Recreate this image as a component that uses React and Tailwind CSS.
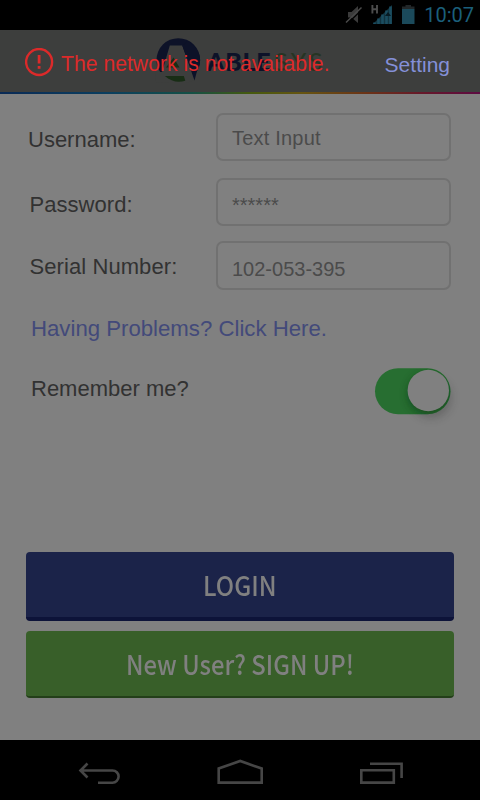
import React from "react";

const arial = "font-['Liberation_Sans',Arial,sans-serif]";

function StatusBar() {
  return (
    <div className="flex h-[30px] shrink-0 items-start justify-end bg-black pr-[6px]">
      <svg className="h-[30px] w-[80px]" viewBox="340 0 80 30" fill="none">
        <path d="M348 12h3.500l6.500-6v17l-6.500-5.500H348z" fill="#3b3b3b" />
        <path d="M346.800 24.300 362.300 9.300" stroke="#000" strokeWidth="1.200" />
        <path d="M346 22.500 361.500 7.500" stroke="#4a4a4a" strokeWidth="1.500" />
        <path d="M372.400 5v8.500M377 5v8.500M372.400 9.300H377" stroke="#4c4c4c" strokeWidth="1.900" />
        <path d="M373 24 392 5v19z" fill="#12333f" />
        <path d="M374.500 24v-1.500M378.500 24v-5.500M382.500 24v-9.500M386.500 24v-13.500M390.500 24V6.500" stroke="#1b4d60" strokeWidth="2.600" />
        <path d="M388 12l3 4h-6z" fill="#071a22" />
        <path d="M405.500 5h5.500v1.500h3.500v2.500H402V6.500h3.500z" fill="#222729" />
        <path d="M402 9h12.500v15H402z" fill="#1b4a5b" />
      </svg>
      <span className="ml-[4px] mt-[3px] font-['Roboto',sans-serif] text-[20px] leading-[24px] text-[#1b5f7b]">10:07</span>
    </div>
  );
}

function Logo() {
  return (
    <div className="flex h-[46px] items-start">
      <svg className="h-[46px] w-[46px]" viewBox="155 37 46 46" fill="none">
        <circle cx="178.300" cy="60" r="21.800" fill="#0d1228" />
        <path d="M169.800 45.500h12.400L195 80l-12 4-28-2 1-10h6z" fill="#3d3e3d" />
        <path d="M182.300 45.500 194.500 80.500 197 71c2-3 3.100-7 3.100-11 0-8-5-14-12-19z" fill="#0d1228" />
        <path d="M173.500 57.500 179.500 67.500h-13.500z" fill="#182d15" />
        <path d="M164.800 76h19l1.500 4.700c-7 2.300-14 1-20.500-4.700z" fill="#182d15" />
      </svg>
      <span className="ml-[6px] mt-[12px] font-['Lato',sans-serif] text-[25px] font-black leading-[24px] tracking-[0.7px] text-[#0d1228]">
        ABLE<span className="ml-[3px] font-normal tracking-[3.200px] text-[#263423]">SYS</span>
      </span>
    </div>
  );
}

function Header() {
  return (
    <header className="relative h-[64px] shrink-0 bg-[#3d3e3d]">
      <div className="flex h-[62px] justify-start pl-[155px] pt-[7px]">
        <Logo />
      </div>
      <div className="h-[2px] bg-[linear-gradient(90deg,#0a2a55_0%,#0b3e5f_22%,#155045_40%,#455a0e_52%,#665411_63%,#6b3417_76%,#66182a_88%,#5d0b42_100%)]" />
      <div className={`absolute inset-0 flex items-start pl-[25px] ${arial}`}>
        <svg className="mt-[18px] h-[29px] w-[29px]" viewBox="0 0 29 29" fill="none">
          <circle cx="14.100" cy="14" r="13" stroke="#dc2a2a" strokeWidth="2.400" />
          <path d="M14.100 7v8.500" stroke="#dc2a2a" strokeWidth="2.800" />
          <path d="M14.100 18v2.800" stroke="#dc2a2a" strokeWidth="2.800" />
        </svg>
        <span className="ml-[7px] mt-[22px] whitespace-nowrap text-[21.200px] leading-[24px] text-[#dc2a2a]">The network is not available.</span>
        <span className="ml-auto mr-[30px] mt-[23px] text-[21px] leading-[24px] text-[#8490d8]">Setting</span>
      </div>
    </header>
  );
}

function Field({ label, value, row, labelClass, valueClass }) {
  return (
    <div className={`flex items-start ${row}`}>
      <span className={`w-[187.500px] shrink-0 text-[22px] leading-[26px] text-[#323232] ${labelClass}`}>{label}</span>
      <div className="h-full w-[235.500px] rounded-[7px] border-2 border-[#717171] pl-[14.500px]">
        <span className={`block text-[20px] leading-[24px] text-[#4b4b4b] ${valueClass}`}>{value}</span>
      </div>
    </div>
  );
}

function Toggle() {
  return (
    <svg className="h-[75px] w-[105px]" viewBox="365 355 105 75">
      <defs>
        <filter id="knob" x="-50%" y="-50%" width="200%" height="200%">
          <feGaussianBlur stdDeviation="5" />
        </filter>
        <clipPath id="track">
          <rect x="375" y="368.200" width="75.500" height="46" rx="23" />
        </clipPath>
      </defs>
      <circle cx="431" cy="398" r="20" fill="#222" opacity=".28" filter="url(#knob)" />
      <rect x="375" y="368.200" width="75.500" height="46" rx="23" fill="#276e31" />
      <g clipPath="url(#track)">
        <circle cx="429" cy="394" r="20" fill="#0b3512" opacity=".7" filter="url(#knob)" />
      </g>
      <circle cx="428.300" cy="390.500" r="20.700" fill="#808080" />
    </svg>
  );
}

function NavBar() {
  return (
    <nav className="flex h-[60px] shrink-0 bg-black">
      <svg className="h-[60px] w-[480px]" viewBox="0 740 480 60" fill="none" stroke="#464646" strokeWidth="2.600">
        <path d="M80.500 770.500h32a6.100 6.100 0 0 1 0 12.200H98M87.500 763.500l-7 7 7 7" />
        <path d="M218.700 782.600V768.500L240.200 761l21.500 7.500v14.100z" />
        <path d="M361.300 770.300h32.500v12.300h-32.500zM370 763.800h31.600V778" />
      </svg>
    </nav>
  );
}

export default function App() {
  return (
    <div className={`flex h-[800px] w-[480px] flex-col overflow-hidden bg-[#808080] ${arial}`}>
      <StatusBar />
      <Header />
      <main className="flex h-[646px] shrink-0 flex-col pl-[28px] pr-[26px] pt-[19px]">
        <Field label="Username:" value="Text Input" row="h-[48px]" labelClass="mt-[14px]" valueClass="mt-[11px] tracking-[0.2px]" />
        <Field label="Password:" value="******" row="mt-[17px] h-[48px]" labelClass="pl-[1.500px] mt-[14px] tracking-[0.050px]" valueClass="mt-[13px]" />
        <Field label="Serial Number:" value="102-053-395" row="mt-[15px] h-[49px]" labelClass="pl-[1.500px] mt-[13px] tracking-[0.080px]" valueClass="mt-[14px]" />
        <a className="ml-[3px] mt-[26px] text-[22.200px] leading-[26px] text-[#434a7a]">Having Problems? Click Here.</a>
        <div className="mt-[13px] flex h-[75px] items-start">
          <span className="ml-[3px] mt-[21px] text-[22px] leading-[26px] text-[#323232]">Remember me?</span>
          <div className="-mr-4 ml-auto"><Toggle /></div>
        </div>
        <div className="-ml-[2px] mb-[42px] mt-auto flex w-[428px] flex-col gap-[10px] font-['Noto_Sans_CJK_SC',sans-serif] text-[27px] font-medium leading-[32px] text-[#808080]">
          <button className="flex h-[69px] items-center justify-center rounded-[4px] border-b-4 border-[#0d1339] bg-[#1b2349]">
            <span className="scale-x-[0.9]">LOGIN</span>
          </button>
          <button className="flex h-[67px] items-center justify-center rounded-[4px] border-b-2 border-[#233f19] bg-[#385f29]">
            <span className="scale-x-[0.883]">New User? SIGN UP!</span>
          </button>
        </div>
      </main>
      <NavBar />
    </div>
  );
}
